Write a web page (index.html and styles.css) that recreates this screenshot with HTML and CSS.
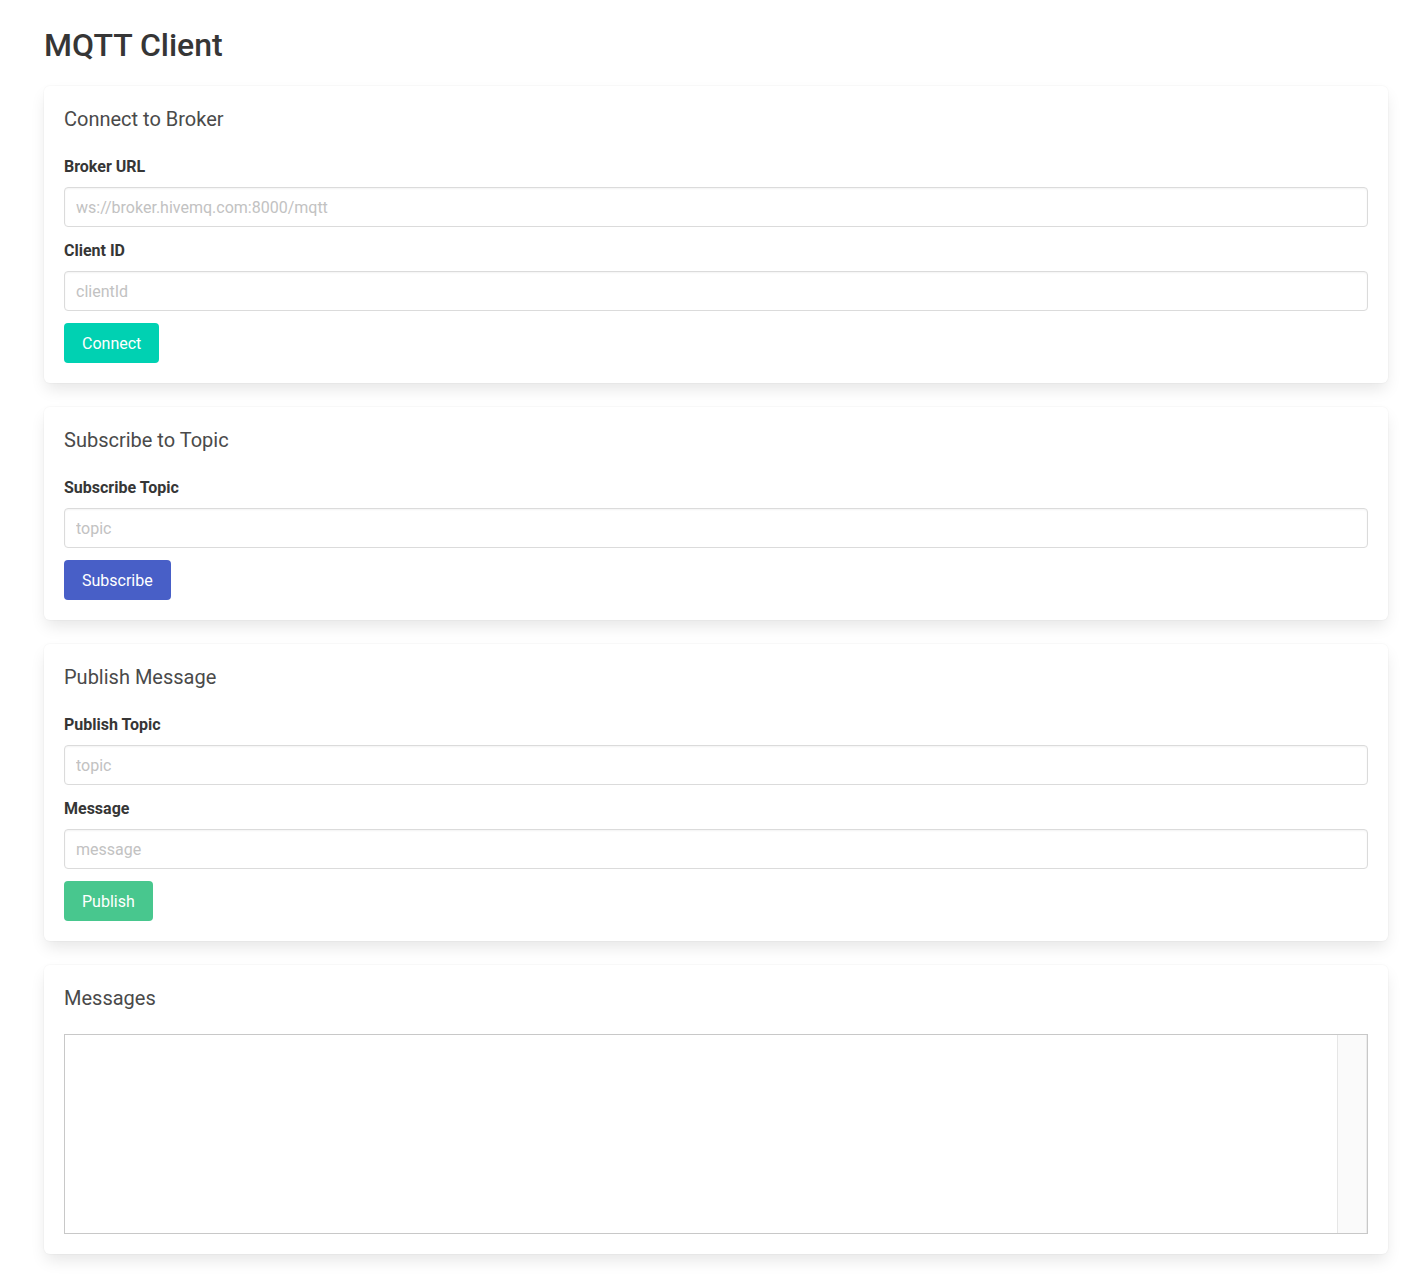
FILE: index.html
```html
<!DOCTYPE html>
<html lang="en">
<head>
    <meta charset="UTF-8">
    <title>MQTT Client</title>
    <link rel="stylesheet" href="styles.css">
</head>
<body>
    <div class="container">
        <h1 class="title">MQTT Client</h1>

        <div class="box">
            <h2 class="subtitle">Connect to Broker</h2>
            <div class="field">
                <label class="label">Broker URL</label>
                <input class="input" type="text" placeholder="ws://broker.hivemq.com:8000/mqtt">
            </div>
            <div class="field">
                <label class="label">Client ID</label>
                <input class="input" type="text" placeholder="clientId">
            </div>
            <button class="button is-primary">Connect</button>
        </div>

        <div class="box">
            <h2 class="subtitle">Subscribe to Topic</h2>
            <div class="field">
                <label class="label">Subscribe Topic</label>
                <input class="input" type="text" placeholder="topic">
            </div>
            <button class="button is-link">Subscribe</button>
        </div>

        <div class="box">
            <h2 class="subtitle">Publish Message</h2>
            <div class="field">
                <label class="label">Publish Topic</label>
                <input class="input" type="text" placeholder="topic">
            </div>
            <div class="field">
                <label class="label">Message</label>
                <input class="input" type="text" placeholder="message">
            </div>
            <button class="button is-success">Publish</button>
        </div>

        <div class="box">
            <h2 class="subtitle">Messages</h2>
            <div class="messages">
                <div class="messages-list"></div>
                <div class="messages-track"></div>
            </div>
        </div>
    </div>
</body>
</html>
```

FILE: styles.css
```css
* {
    box-sizing: border-box;
}

body {
    margin: 0;
    background: #ffffff;
    color: #4a4a4a;
    font-family: Roboto, "Noto Sans", sans-serif;
    font-size: 16px;
}

.container {
    padding: 26px 36px 28px 44px;
}

.title {
    margin: 0 0 23px 0;
    padding-top: 1px;
    font-size: 32px;
    font-weight: 500;
    line-height: 36px;
    color: #363636;
}

.box {
    background: #ffffff;
    border-radius: 6px;
    padding: 20px;
    margin-bottom: 24px;
    box-shadow: 0 8px 16px -2px rgba(10, 10, 10, 0.1), 0 0 0 1px rgba(10, 10, 10, 0.02);
}

.box:last-child {
    margin-bottom: 0;
}

.subtitle {
    margin: 0 0 24px 0;
    padding-top: 1px;
    font-size: 20px;
    font-weight: 400;
    line-height: 24px;
    color: #4a4a4a;
}

.field {
    margin-bottom: 12px;
}

.label {
    display: block;
    margin-bottom: 8px;
    font-size: 16px;
    font-weight: 700;
    line-height: 24px;
    color: #363636;
}

.input {
    display: block;
    width: 100%;
    height: 40px;
    padding: 0 11px;
    border: 1px solid #dbdbdb;
    border-radius: 4px;
    font-family: inherit;
    font-size: 16px;
    color: #363636;
    background: #ffffff;
    box-shadow: inset 0 1px 2px rgba(10, 10, 10, 0.05);
}

.input::placeholder {
    color: #c2c2c2;
}

.button {
    display: block;
    height: 40px;
    padding: 0 17px;
    border: 1px solid transparent;
    border-radius: 4px;
    font-family: inherit;
    font-size: 16px;
    color: #ffffff;
    cursor: pointer;
}

.is-primary {
    background: #00d1b2;
}

.is-link {
    background: #485fc7;
}

.is-success {
    background: #48c78e;
}

.messages {
    display: flex;
    height: 200px;
    border: 1px solid #c8c8c8;
}

.messages-list {
    flex: 1;
}

.messages-track {
    width: 30px;
    background: #fafafa;
    border-left: 1px solid #e6e6e6;
    border-right: 1px solid #ececec;
}
```
